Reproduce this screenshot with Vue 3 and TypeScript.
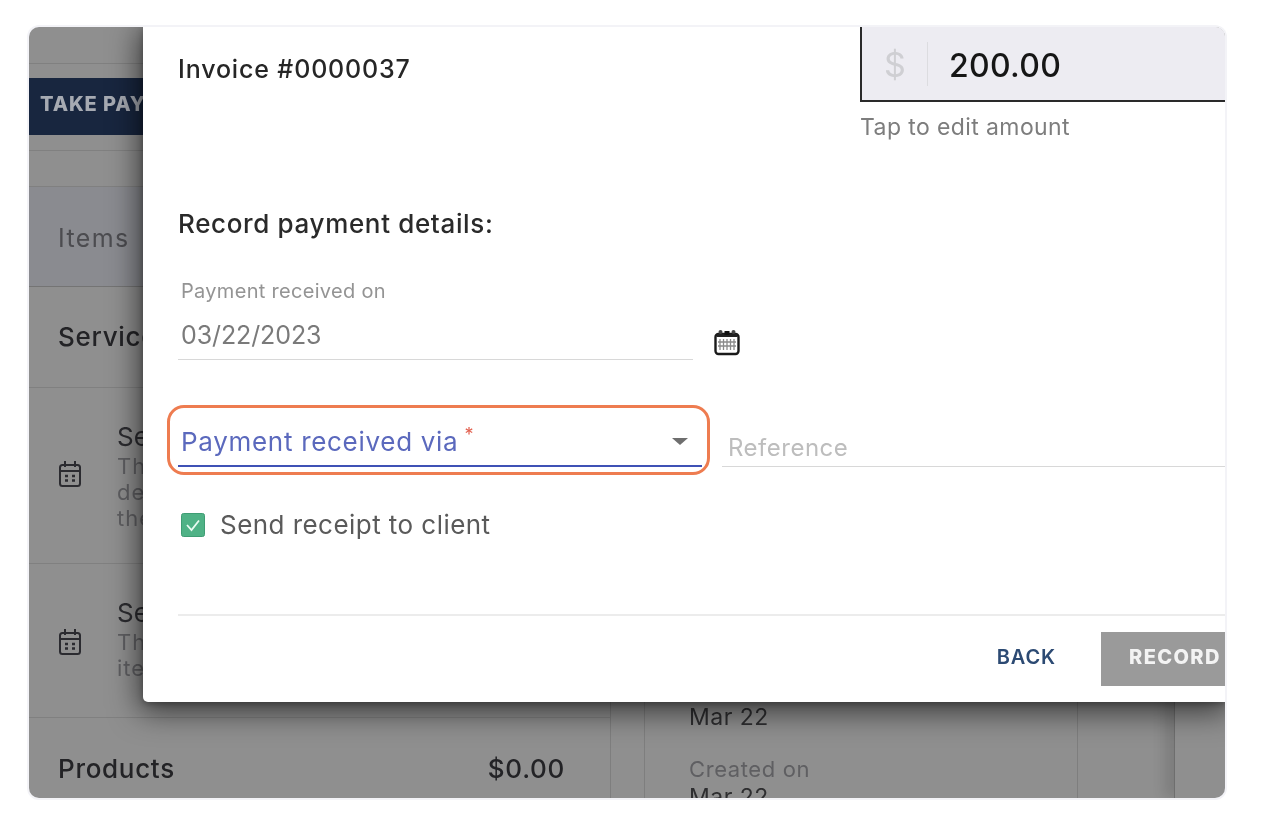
<script setup lang="ts">
interface Row { title: string; lines: string[]; height: number }
const rows: Row[] = [
  { title: 'Se', lines: ['The', 'de', 'the'], height: 176 },
  { title: 'Se', lines: ['The', 'ite'], height: 154 },
]
</script>

<template>
  <main class="page">
    <section class="card">
      <div class="backdrop">
        <div class="strip s1"></div>
        <div class="strip s2"><button class="take">TAKE PAYMENT</button></div>
        <div class="strip s3"></div>
        <div class="columns">
          <div class="left">
            <div class="tab"><span>Items</span></div>
            <div class="sum"><span>Services</span></div>
            <div v-for="(r, i) in rows" :key="i" class="item" :class="{ second: i === 1 }" :style="{ height: r.height + 'px' }">
              <svg class="ic" width="24" height="28" viewBox="0 0 24 28" fill="none" stroke="#2b2b30" stroke-width="2">
                <rect x="2" y="5" width="20" height="21" rx="2.5" />
                <path d="M7 1v6M17 1v6M2 11h20" />
                <path d="M7 16h3M14 16h3M7 20.500h3M14 20.500h3" stroke-width="2.400" />
              </svg>
              <div class="txt">
                <div class="t">{{ r.title }}</div>
                <div v-for="l in r.lines" :key="l" class="d">{{ l }}</div>
              </div>
            </div>
            <div class="sum products"><span>Products</span><b>$0.00</b></div>
          </div>
          <div class="mid">
            <div class="val">Mar 22</div>
            <div class="lab">Created on</div>
            <div class="val">Mar 22</div>
          </div>
          <div class="right"></div>
        </div>
      </div>

      <div class="modal">
        <div class="head">
          <h2 class="inv">Invoice #0000037</h2>
          <div class="amount">
            <div class="box">
              <span class="cur">$</span>
              <span class="sep"></span>
              <span class="num">200.00</span>
            </div>
            <div class="hint">Tap to edit amount</div>
          </div>
        </div>
        <h3 class="rec">Record payment details:</h3>
        <div class="date-row">
          <div class="date">
            <div class="lbl">Payment received on</div>
            <div class="dv">03/22/2023</div>
          </div>
          <svg class="cal" width="28" height="28" viewBox="0 0 28 28" fill="none">
            <rect x="2.500" y="6" width="23" height="20" rx="3" fill="#fff" stroke="#1a1a1a" stroke-width="2.400" />
            <path d="M4 6h20v3H4z" fill="#222" />
            <circle cx="7.500" cy="4" r="2" fill="#444" />
            <circle cx="20.500" cy="4" r="2" fill="#444" />
            <rect x="11.500" y="3" width="5" height="4" fill="#111" />
            <path d="M7 11v11M10.500 11v11M14 11v11M17.500 11v11M21 11v11M5 14h18M5 18h18" stroke="#8a8a8a" stroke-width="1.300" />
          </svg>
        </div>
        <div class="via-row">
          <div class="via">
            <span class="vt">Payment received via<sup>*</sup></span>
            <span class="arrow"></span>
          </div>
          <div class="ref">Reference</div>
        </div>
        <label class="chk">
          <svg width="24" height="24" viewBox="0 0 24 24">
            <rect x="0.500" y="0.500" width="23" height="23" rx="2" fill="#4fb286" stroke="#3f9d74" />
            <path d="M6 12l4.500 5L18 7.500" fill="none" stroke="#e9fbf2" stroke-width="1.800" />
          </svg>
          <span>Send receipt to client</span>
        </label>
        <div class="foot">
          <span class="back">BACK</span>
          <span class="record">RECORD</span>
        </div>
      </div>
    </section>
  </main>
</template>

<style>
html, body { margin: 0; background: #fff; }
</style>

<style scoped>
.page {
  width: 1268px;
  height: 814px;
  padding: 27px 0 0 29px;
  box-sizing: border-box;
  font-family: Inter, "Open Sans", sans-serif;
  overflow: hidden;
}
.card {
  position: relative;
  width: 1196px;
  height: 771px;
  border-radius: 10px;
  overflow: hidden;
  box-shadow: 0 0 0 2px #f3f3f7;
  filter: blur(0.55px);
  background: #8f8f8f;
}
.backdrop { height: 100%; display: flex; flex-direction: column; }
.strip { box-sizing: border-box; }
.s1 { height: 37px; border-bottom: 1px solid #808080; }
.s2 { height: 87px; padding-top: 14px; border-bottom: 1px solid #808080; box-sizing: border-box; }
.s3 { height: 36px; border-bottom: 1px solid #808080; }
.take {
  display: block;
  width: 114px;
  height: 57px;
  padding: 0 0 4px 11px;
  border: 0;
  background: #18263f;
  color: #a6aab2;
  font: 800 20px/53px Inter, sans-serif;
  text-align: left;
  white-space: nowrap;
  overflow: hidden;
  letter-spacing: .9px;
}
.columns { flex: 1; display: flex; min-height: 0; }
.left { width: 581px; flex: none; border-right: 1px solid #7e7e7e; }
.tab {
  height: 100px;
  box-sizing: border-box;
  background: #8a8b90;
  border-bottom: 1px solid #747474;
  padding: 36px 0 0 29px;
  color: #4c4c50;
  font-size: 25px;
  line-height: 30px;
  letter-spacing: 1.4px;
}
.sum {
  height: 101px;
  box-sizing: border-box;
  padding: 35px 45px 0 29px;
  border-bottom: 1px solid #808080;
  color: #232326;
  font-size: 26px;
  line-height: 30px;
  font-weight: 500;
  letter-spacing: .7px;
  display: flex;
  justify-content: space-between;
}
.products { border: 0; padding-top: 36px; height: 82px; }
.products b { font-weight: 500; }
.item {
  display: flex;
  box-sizing: border-box;
  border-bottom: 1px solid #808080;
  padding: 32px 0 0 29px;
  gap: 35px;
  align-items: flex-start;
}
.ic { flex: none; margin-top: 40px; }
.second .ic { margin-top: 32px; }
.t { font-size: 26px; line-height: 33px; color: #2c2c30; }
.d { font-size: 22px; line-height: 26px; color: #5f5f62; letter-spacing: 1px; }
.mid {
  margin-left: 33px;
  width: 434px;
  flex: none;
  box-sizing: border-box;
  border: 1px solid #7e7e7e;
  border-width: 0 1px;
  padding: 516px 0 0 44px;
}
.val { font-size: 23px; line-height: 28px; color: #2e2e30; letter-spacing: .5px; }
.lab { font-size: 22px; line-height: 28px; color: #5f5f62; margin-top: 24px; letter-spacing: .6px; }
.right {
  margin-left: 96px;
  flex: 1;
  border-left: 1px solid #6e6e6e;
  box-shadow: -10px 0 12px rgba(0, 0, 0, .12);
}

.modal {
  position: absolute;
  left: 114px;
  top: 0;
  right: 0;
  height: 675px;
  display: flex;
  flex-direction: column;
  padding-left: 35px;
  box-sizing: border-box;
  background: #fff;
  border-radius: 0 0 0 5px;
  box-shadow: 0 6px 30px 4px rgba(0, 0, 0, .6), 0 2px 6px rgba(0, 0, 0, .25);
  color: #222;
}
.head { display: flex; height: 127px; flex: none; }
.inv {
  margin: 26px 0 0;
  width: 682px;
  flex: none;
  font-size: 25px;
  line-height: 32px;
  font-weight: 500;
  color: #262626;
  letter-spacing: .85px;
}
.amount { flex: 1; min-width: 0; }
.box {
  height: 75px;
  box-sizing: border-box;
  background: #edecf2;
  border-left: 2px solid #2a2a2a;
  border-bottom: 2px solid #2a2a2a;
  display: flex;
  align-items: center;
  margin-right: -2px;
  padding: 0 0 0 22px;
}
.cur { font-size: 34px; color: #cfcfd3; width: 22px; margin-bottom: -1px; }
.sep { width: 1px; height: 44px; background: #dcdce0; margin: 0 21px 0 21px; }
.num { font-size: 32px; font-weight: 500; color: #161616; letter-spacing: .3px; margin-top: 4px; }
.hint { margin-top: 12px; font-size: 23px; line-height: 26px; color: #7d7d7d; letter-spacing: .4px; }
.rec {
  margin: 55px 0 0;
  font-size: 26px;
  line-height: 30px;
  font-weight: 500;
  color: #2a2a2a;
  letter-spacing: .65px;
}
.date-row { display: flex; margin-top: 41px; align-items: flex-start; }
.date { width: 515px; height: 80px; box-sizing: border-box; border-bottom: 1px solid #d8d8d8; padding-left: 3px; }
.lbl { font-size: 20px; line-height: 24px; color: #949494; letter-spacing: .3px; margin-top: -1px; }
.dv { margin-top: 17px; font-size: 25px; line-height: 30px; color: #7a7a7a; letter-spacing: -.1px; }
.cal { margin: 48px 0 0 20px; }
.via-row { display: flex; margin-top: 45px; margin-left: -11px; align-items: flex-start; }
.via {
  width: 543px;
  height: 70px;
  box-sizing: border-box;
  border: 3px solid #ee7c50;
  border-radius: 17px;
  position: relative;
  padding: 18px 0 0 11px;
}
.via::after {
  content: "";
  position: absolute;
  left: 8px;
  right: 5px;
  bottom: 5px;
  height: 2px;
  background: #3f51b5;
}
.vt { font-size: 26px; line-height: 32px; color: #5b69bd; letter-spacing: .7px; }
.vt sup { color: #e2604f; font-size: 18px; margin-left: 6px; line-height: 0; }
.arrow {
  position: absolute;
  right: 19px;
  top: 30px;
  width: 0;
  height: 0;
  border: 8px solid transparent;
  border-top: 7px solid #6e6e6e;
  border-bottom: 0;
}
.ref {
  margin: 25px 0 0 12px;
  flex: 1;
  height: 36px;
  padding-left: 6px;
  border-bottom: 1px solid #d8d8d8;
  font-size: 24px;
  line-height: 36px;
  color: #bdbdbd;
  letter-spacing: .5px;
}
.chk { display: flex; align-items: center; gap: 15px; margin: 34px 0 0 3px; font-size: 26px; line-height: 32px; color: #5a5a5a; letter-spacing: .45px; }
.chk svg { flex: none; }
.foot {
  margin-top: 73px;
  border-top: 2px solid #ececec;
  height: 71px;
  padding-top: 16px;
  display: flex;
  justify-content: flex-end;
  align-items: flex-start;
}
.back { font-size: 20px; line-height: 50px; font-weight: 600; color: #2c4a73; margin-right: 45px; letter-spacing: .9px; }
.record {
  width: 124px;
  height: 54px;
  box-sizing: border-box;
  padding-left: 28px;
  background: #9a9a9a;
  color: #f3f3f3;
  font-size: 20px;
  font-weight: 800;
  line-height: 50px;
  white-space: nowrap;
  overflow: hidden;
  letter-spacing: 1.4px;
}
</style>
